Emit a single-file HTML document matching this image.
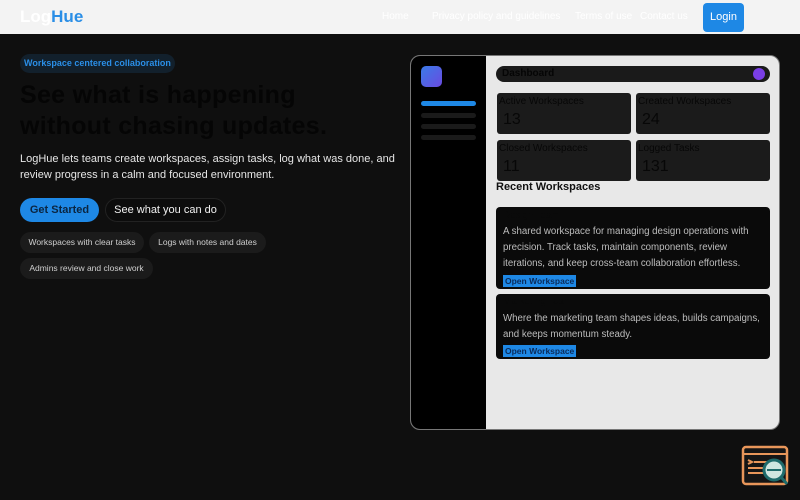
<!DOCTYPE html>
<html><head><meta charset="utf-8"><style>
*{margin:0;padding:0;box-sizing:border-box}
body{width:800px;height:500px;overflow:hidden;background:#0f0f0f;font-family:"Liberation Sans",sans-serif;position:relative}
.nav{position:absolute;left:0;top:0;width:800px;height:34px;background:#f3f3f3}
.logo{position:absolute;left:20px;top:7px;font-size:17px;font-weight:bold;color:#fff}
.logo span{color:#2a8ee6}
.nl{position:absolute;top:11px;font-size:10px;color:#fff}
.login{position:absolute;left:703px;top:3px;width:41px;height:29px;background:#1e88e5;border-radius:4px;color:#fff;font-size:11px;text-align:center;line-height:29px}
.badge{position:absolute;left:20px;top:54px;width:155px;height:19px;border-radius:10px;background:#12202c;color:#2a8ee6;font-size:9px;font-weight:bold;line-height:19px;text-align:center}
h1{position:absolute;left:20px;top:80px;font-size:25px;line-height:31px;color:#050505;font-weight:bold;letter-spacing:0.3px}
.p{position:absolute;left:20px;top:151px;font-size:11px;line-height:16px;color:#e6e6e6;width:380px}
.b1{position:absolute;left:20px;top:198px;width:79px;height:24px;border-radius:12px;background:#1e88e5;color:#0b2540;font-size:11px;font-weight:bold;text-align:center;line-height:24px}
.b2{position:absolute;left:105px;top:198px;width:121px;height:24px;border-radius:12px;border:1px solid #222;background:#0c0c0c;color:#f0f0f0;font-size:11px;text-align:center;line-height:22px}
.chip{position:absolute;height:21px;border-radius:11px;background:#1b1b1b;color:#cfcfcf;font-size:8.5px;line-height:21px;text-align:center}
.card{position:absolute;left:410px;top:55px;width:370px;height:375px;border-radius:10px;background:#e8e8e8;overflow:hidden;border:1px solid #777}
.side{position:absolute;left:0;top:0;width:75px;height:100%;background:#000}
.ico{position:absolute;left:10px;top:10px;width:21px;height:21px;border-radius:5px;background:linear-gradient(135deg,#3a7be8,#6a4ae0)}
.bar{position:absolute;left:10px;width:55px;height:5px;border-radius:3px;background:#1a1a1a}
.dash{position:absolute;left:85px;top:10px;width:274px;height:16px;border-radius:8px;background:#1a1a1a;font-size:10px;color:#050505;font-weight:bold;padding-left:6px;line-height:16px}
.dot{position:absolute;right:5px;top:2px;width:12px;height:12px;border-radius:6px;background:#7a3ee6}
.st{position:absolute;width:134px;height:41px;background:#1b1b1b;border-radius:3px}
.st .l{position:absolute;left:2px;top:3px;font-size:10px;color:#070707}
.st .n{position:absolute;left:6px;top:18px;font-size:16px;color:#070707}
.rw{position:absolute;left:85px;top:125px;font-size:11px;font-weight:bold;color:#111}
.ws{position:absolute;left:85px;width:274px;background:#0a0a0a;border-radius:4px}
.ws .t{position:absolute;left:7px;font-size:9.7px;line-height:16px;color:#bdbdbd;width:268px}
.ws .o{position:absolute;left:7px;background:#1e88e5;color:#0b2a58;font-size:8.5px;font-weight:bold;padding:0 2px;height:12px;line-height:12px}
</style></head><body>
<div class="nav">
<div class="logo">Log<span>Hue</span></div>
<div class="nl" style="left:382px">Home</div>
<div class="nl" style="left:432px">Privacy policy and guidelines</div>
<div class="nl" style="left:575px">Terms of use</div>
<div class="nl" style="left:640px">Contact us</div>
<div class="login">Login</div>
</div>
<div class="badge">Workspace centered collaboration</div>
<h1>See what is happening<br>without chasing updates.</h1>
<div class="p">LogHue lets teams create workspaces, assign tasks, log what was done, and review progress in a calm and focused environment.</div>
<div class="b1">Get Started</div>
<div class="b2">See what you can do</div>
<div class="chip" style="left:20px;top:232px;width:124px">Workspaces with clear tasks</div>
<div class="chip" style="left:149px;top:232px;width:117px">Logs with notes and dates</div>
<div class="chip" style="left:20px;top:258px;width:133px">Admins review and close work</div>
<div class="card">
<div class="side"><div class="ico"></div>
<div class="bar" style="top:45px;background:#1e88e5"></div>
<div class="bar" style="top:57px"></div>
<div class="bar" style="top:68px"></div>
<div class="bar" style="top:79px"></div></div>
<div class="dash">Dashboard<div class="dot"></div></div>
<div class="st" style="left:86px;top:37px"><div class="l">Active Workspaces</div><div class="n">13</div></div>
<div class="st" style="left:225px;top:37px"><div class="l">Created Workspaces</div><div class="n">24</div></div>
<div class="st" style="left:86px;top:84px"><div class="l">Closed Workspaces</div><div class="n">11</div></div>
<div class="st" style="left:225px;top:84px"><div class="l">Logged Tasks</div><div class="n">131</div></div>
<div class="rw">Recent Workspaces</div>
<div class="ws" style="top:151px;height:82px">
<div class="t" style="top:1px;color:#0a0a0a">Design Team</div>
<div class="t" style="top:17px">A shared workspace for managing design operations with precision. Track tasks, maintain components, review iterations, and keep cross-team collaboration effortless.</div>
<div class="o" style="top:68px">Open Workspace</div></div>
<div class="ws" style="top:238px;height:65px">
<div class="t" style="top:0px;color:#0a0a0a">Marketing Team</div>
<div class="t" style="top:17px">Where the marketing team shapes ideas, builds campaigns, and keeps momentum steady.</div>
<div class="o" style="top:51px">Open Workspace</div></div>
</div>
<svg style="position:absolute;left:740px;top:444px" width="52" height="46" viewBox="0 0 52 46">
<rect x="3" y="3" width="44" height="37" rx="3" fill="#151515" stroke="#e8965a" stroke-width="2.5"/>
<line x1="3" y1="10" x2="47" y2="10" stroke="#e8965a" stroke-width="2"/>
<path d="M8 16l4 2-4 2M14 18h14M8 24h18M8 29h16" stroke="#e8965a" stroke-width="2" fill="none"/>
<circle cx="34" cy="26" r="10" fill="#cfe6e0" stroke="#1e6b6b" stroke-width="3"/>
<line x1="27" y1="26" x2="41" y2="26" stroke="#1e6b6b" stroke-width="2"/>
<line x1="41" y1="33" x2="47" y2="40" stroke="#1e6b6b" stroke-width="3"/>
</svg>
</body></html>
